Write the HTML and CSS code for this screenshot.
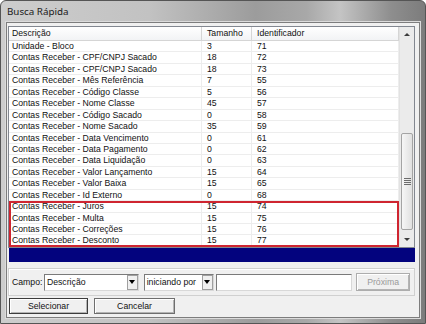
FILE: index.html
```html
<!DOCTYPE html>
<html lang="pt">
<head>
    <meta charset="UTF-8">
    <title>Busca Rápida</title>
<link rel="stylesheet" href="styles.css">
</head>
<body>
    <div class="window">
        <div class="titlebar">Busca Rápida</div>

        <div class="client">
            <div class="grid">
                <div class="list">
                    <div class="header">
                        <div class="cell c1">Descrição</div>
                        <div class="cell c2">Tamanho</div>
                        <div class="cell c3">Identificador</div>
                    </div>

                    <div class="row"><div class="cell c1">Unidade - Bloco</div><div class="cell c2">3</div><div class="cell c3">71</div></div>
                    <div class="row"><div class="cell c1">Contas Receber - CPF/CNPJ Sacado</div><div class="cell c2">18</div><div class="cell c3">72</div></div>
                    <div class="row"><div class="cell c1">Contas Receber - CPF/CNPJ Sacado</div><div class="cell c2">18</div><div class="cell c3">73</div></div>
                    <div class="row"><div class="cell c1">Contas Receber - Mês Referência</div><div class="cell c2">7</div><div class="cell c3">55</div></div>
                    <div class="row"><div class="cell c1">Contas Receber - Código Classe</div><div class="cell c2">5</div><div class="cell c3">56</div></div>
                    <div class="row"><div class="cell c1">Contas Receber - Nome Classe</div><div class="cell c2">45</div><div class="cell c3">57</div></div>
                    <div class="row"><div class="cell c1">Contas Receber - Código Sacado</div><div class="cell c2">0</div><div class="cell c3">58</div></div>
                    <div class="row"><div class="cell c1">Contas Receber - Nome Sacado</div><div class="cell c2">35</div><div class="cell c3">59</div></div>
                    <div class="row"><div class="cell c1">Contas Receber - Data Vencimento</div><div class="cell c2">0</div><div class="cell c3">61</div></div>
                    <div class="row"><div class="cell c1">Contas Receber - Data Pagamento</div><div class="cell c2">0</div><div class="cell c3">62</div></div>
                    <div class="row"><div class="cell c1">Contas Receber - Data Liquidação</div><div class="cell c2">0</div><div class="cell c3">63</div></div>
                    <div class="row"><div class="cell c1">Contas Receber - Valor Lançamento</div><div class="cell c2">15</div><div class="cell c3">64</div></div>
                    <div class="row"><div class="cell c1">Contas Receber - Valor Baixa</div><div class="cell c2">15</div><div class="cell c3">65</div></div>
                    <div class="row"><div class="cell c1">Contas Receber - Id Externo</div><div class="cell c2">0</div><div class="cell c3">68</div></div>

                    <div class="marked">
                        <div class="row"><div class="cell c1">Contas Receber - Juros</div><div class="cell c2">15</div><div class="cell c3">74</div></div>
                        <div class="row"><div class="cell c1">Contas Receber - Multa</div><div class="cell c2">15</div><div class="cell c3">75</div></div>
                        <div class="row"><div class="cell c1">Contas Receber - Correções</div><div class="cell c2">15</div><div class="cell c3">76</div></div>
                        <div class="row"><div class="cell c1">Contas Receber - Desconto</div><div class="cell c2">15</div><div class="cell c3">77</div></div>
                    </div>
                </div>

                <div class="scrollbar">
                    <div class="arrow"><span class="tri up"></span></div>
                    <div class="track">
                        <div class="thumb"><span></span><span></span><span></span><span></span></div>
                    </div>
                    <div class="arrow"><span class="tri down"></span></div>
                </div>
            </div>

            <div class="status"></div>

            <div class="filter">
                <span class="label">Campo:</span>
                <div class="combo wide"><span class="value">Descrição</span><span class="drop"><span class="tri down"></span></span></div>
                <div class="combo narrow"><span class="value">iniciando por</span><span class="drop"><span class="tri down"></span></span></div>
                <div class="textbox"></div>
                <button type="button" class="btn next" disabled>Próxima</button>
            </div>

            <div class="actions">
                <button type="button" class="btn default">Selecionar</button>
                <button type="button" class="btn cancel">Cancelar</button>
            </div>
        </div>
    </div>
</body>
</html>
```

FILE: styles.css
```css
*{
    box-sizing:border-box;
}
body{
    margin:0;
    font-family:"Liberation Sans", Arial, sans-serif;
    color:#111;
}
.window{
    width:426px;
    height:324px;
    padding:0 5px 5px;
    border:1px solid #555;
    border-radius:6px 6px 0 0;
    background:linear-gradient(to right, #cdcdcd 0%, #c2c2c2 35%, #9c9c9c 60%, #a8a8a8 72%, #c4c4c4 80%, #8e8e8e 92%, #7c7c7c 100%);
    display:flex;
    flex-direction:column;
}
.titlebar{
    height:21px;
    line-height:22px;
    padding-left:1px;
    font-family:"Noto Sans", sans-serif;
    font-size:9.8px;
    color:#1a1a1a;
}
.client{
    flex:1;
    background:#f0f0f0;
    border:1px solid #7d7d7d;
    box-shadow:0 0 0 1px #dcdcdc;
    padding:3px 4px 0 1px;
    display:flex;
    flex-direction:column;
}
.grid{
    height:222px;
    border:1px solid #828790;
    background:#fff;
    display:flex;
}
.list{
    width:390px;
    display:flex;
    flex-direction:column;
}
.header{
    height:14px;
    display:flex;
    background:linear-gradient(#ffffff, #f2f3f5);
    border-bottom:1px solid #d5d5d5;
    font-size:8.7px;
    line-height:13px;
}
.header .cell{
    border-right:1px solid #d5d5d5;
}
.row{
    height:11.44px;
    display:flex;
    border-bottom:1px solid #ededed;
    font-size:8.7px;
    line-height:11px;
}
.cell{
    padding-left:3px;
    white-space:nowrap;
    overflow:hidden;
    border-right:1px solid #ededed;
}
.c1{
    width:193px;
}
.c2{
    width:50px;
    padding-left:5px;
}
.c3{
    flex:1;
    padding-left:5px;
}
.marked{
    outline:2px solid #cf2530;
    outline-offset:-2px;
}
.scrollbar{
    width:15px;
    background:#ebebeb;
    border-left:1px solid #e2e2e2;
    display:flex;
    flex-direction:column;
}
.arrow{
    height:15px;
    display:flex;
    align-items:center;
    justify-content:center;
}
.tri{
    width:0;
    height:0;
    border-left:3px solid transparent;
    border-right:3px solid transparent;
}
.tri.up{
    border-bottom:3px solid #3c3c3c;
}
.tri.down{
    border-top:3px solid #3c3c3c;
}
.track{
    flex:1;
}
.thumb{
    margin:91px 1px 0 1px;
    height:97px;
    border:1px solid #a4a4a4;
    border-radius:2px;
    background:linear-gradient(to right, #f6f6f6, #e0e0e0);
    display:flex;
    flex-direction:column;
    align-items:center;
    justify-content:center;
    gap:1px;
}
.thumb span{
    width:7px;
    height:1px;
    background:#6c6c6c;
}
.status{
    height:14px;
    margin-left:1px;
    background:#03037e;
}
.filter{
    margin-top:6px;
    height:28px;
    border:1px solid #d0d0d0;
    box-shadow:inset 1px 1px 0 #fff;
    display:flex;
    align-items:center;
    padding:0 4px 0 3px;
    font-size:8.7px;
}
.label{
    width:32px;
}
.combo{
    height:17px;
    background:#fff;
    border:1px solid #7a7a7a;
    border-right-color:#d8d8d8;
    border-bottom-color:#d8d8d8;
    display:flex;
    align-items:center;
}
.combo.wide{
    width:95px;
}
.combo.narrow{
    width:70px;
    margin-left:5px;
}
.value{
    flex:1;
    padding-left:2px;
    white-space:nowrap;
    overflow:hidden;
}
.drop{
    width:11px;
    height:100%;
    background:#f0f0f0;
    border:1px solid #a0a0a0;
    display:flex;
    align-items:center;
    justify-content:center;
}
.drop .tri{
    border-left-width:3px;
    border-right-width:3px;
    border-top-width:4px;
    border-top-color:#000;
}
.textbox{
    width:137px;
    height:17px;
    margin-left:2px;
    background:#fff;
    border:1px solid #7a7a7a;
    border-right-color:#d8d8d8;
    border-bottom-color:#d8d8d8;
}
.btn{
    height:16px;
    padding:0;
    font-family:"Liberation Sans", Arial, sans-serif;
    font-size:8.7px;
    color:#111;
    background:#f0f0f0;
    border:1px solid #6e6e6e;
    box-shadow:inset 1px 1px 0 #fff, inset -1px -1px 0 #b4b4b4;
}
.btn.next{
    width:54px;
    height:18px;
    margin-left:4px;
    color:#9a9a9a;
    border-color:#adadad;
}
.actions{
    margin-top:2px;
    display:flex;
    gap:6px;
    padding-left:1px;
}
.btn.default{
    width:79px;
    border-color:#3c3c3c;
}
.btn.cancel{
    width:81px;
}
```
